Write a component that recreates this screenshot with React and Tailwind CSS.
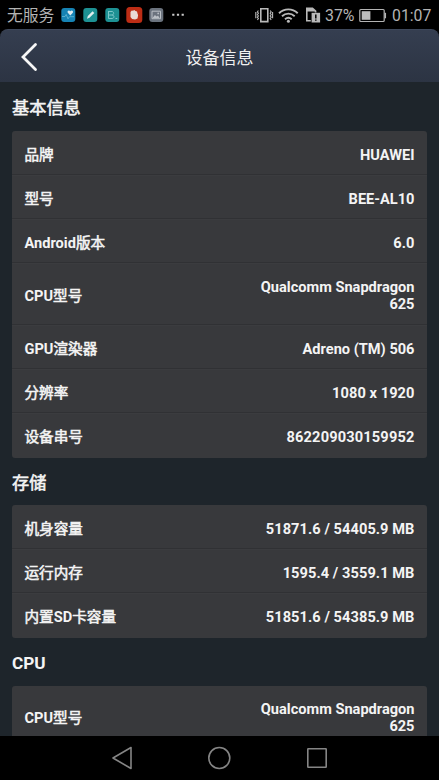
const basic = [
  ['品牌', 'HUAWEI', 'h-11'],
  ['型号', 'BEE-AL10', 'h-11'],
  ['Android版本', '6.0', 'h-11'],
  ['CPU型号', 'Qualcomm Snapdragon 625', 'h-[62px]'],
  ['GPU渲染器', 'Adreno (TM) 506', 'h-11'],
  ['分辨率', '1080 x 1920', 'h-11'],
  ['设备串号', '862209030159952', 'h-[45px]'],
];
const storage = [
  ['机身容量', '51871.6 / 54405.9 MB', 'h-11'],
  ['运行内存', '1595.4 / 3559.1 MB', 'h-11'],
  ['内置SD卡容量', '51851.6 / 54385.9 MB', 'h-[45px]'],
];
const cpu = [['CPU型号', 'Qualcomm Snapdragon 625', 'h-[60px]']];

// Latin runs use the bold face; Chinese runs use the regular face, thickened.
function Mixed({ text }) {
  return text.split(/([A-Za-z]+)/).filter(Boolean).map((part, i) =>
    /^[A-Za-z]/.test(part) ? (
      <span key={i}>{part}</span>
    ) : (
      <span key={i} className="font-normal [-webkit-text-stroke:0.55px_#f4f4f4]">{part}</span>
    ),
  );
}

function tracking(value) {
  if (/^\d{10,}$/.test(value)) return 'tracking-[0.16px]';
  return /^\d/.test(value) ? 'tracking-[0.07px]' : '';
}

function Card({ rows }) {
  return (
    <div className="mx-3 shrink-0 rounded-[3px] bg-[#38393c]">
      {rows.map(([label, value, height]) => (
        <div
          key={label}
          className={`${height} flex items-center justify-between border-b border-[#303134] pt-[5px] pr-[12.5px] pl-[12.5px] text-[14.6px] leading-[17px] font-bold text-[#f4f4f4] shadow-[0_1px_0_#3b3c3f] last:border-transparent last:shadow-none`}
        >
          <span className="whitespace-nowrap"><Mixed text={label} /></span>
          <span className={`max-w-[160px] text-right ${tracking(value)}`}>{value}</span>
        </div>
      ))}
    </div>
  );
}

function Heading({ children, className }) {
  return (
    <h2 className={`${className} flex shrink-0 items-center pl-3 text-[17.2px] leading-none font-bold text-[#f4f4f4]`}>
      <Mixed text={children} />
    </h2>
  );
}

function AppIcons() {
  return (
    <svg className="ml-[7px] shrink-0" width="125" height="30" viewBox="0 0 125 30" fill="none">
      <rect x="0.3" y="8" width="14" height="14" rx="3" fill="#1683b4" />
      <path d="M9.3 15.4 6.8 12.7c-1-1.6 1-3.2 2.5-1.5 1.5-1.7 3.5-.1 2.5 1.5Z" fill="#dceaf0" />
      <path d="M1 16.5h3l1.2-2 1.8 4.4 1.5-2.2H13" stroke="#67bad7" strokeWidth=".8" />
      <rect x="22.3" y="8" width="14" height="14" rx="3" fill="#1d9193" />
      <path d="m26 18.7.8-2.6 4.8-4.8 1.7 1.7-4.8 4.8Z" fill="#e0eeee" />
      <rect x="44.3" y="8" width="14" height="14" rx="3" fill="#1d9193" />
      <path d="M47.5 11.5h3.5c2.2 0 2.2 3.5 0 3.5h-3.5m3.5 0c2.6 0 2.6 3.5 0 3.5h-3.5v-7.5M54.5 18.5h1.8" stroke="#7cc8c9" strokeWidth="1" />
      <rect x="65.3" y="7" width="16" height="16" rx="3.5" fill="#bd2d15" />
      <path d="m69.5 12 1.3-1.6 1.2.4 1.3-.8 1.1 1.1 1.6.3.5 2 .6 1.8-.6 3.2-2.4 1-3-.5-1.6-2Z" fill="#e9d9d4" />
      <rect x="88.3" y="8" width="14" height="14" rx="3" fill="#6b737e" />
      <path d="M91 11.2h8.5v7.5H91Z" stroke="#bbc0c6" />
      <path d="m91.5 18 2.4-3 1.8 1.6 1.3-1.1 1.6 2.5Z" fill="#bbc0c6" />
      <circle cx="97.2" cy="13.4" r=".9" fill="#bbc0c6" />
      <path d="M111.2 14.8h2.2M115.9 14.8h2.2M120.6 14.8h2.2" stroke="#c9c9c9" strokeWidth="2" />
    </svg>
  );
}

function StatusBar() {
  return (
    <div className="flex h-[29px] shrink-0 items-center bg-black text-[#b4b4b4]">
      <span className="mt-[2px] ml-[7px] w-[47px] text-[15.8px] leading-none whitespace-nowrap">无服务</span>
      <AppIcons />
      <svg className="ml-auto shrink-0" width="67" height="30" viewBox="0 0 67 30" fill="none" stroke="#b9b9b9">
        <path d="M5.8 8.8h7v12.8h-7Z" strokeWidth="1.6" />
        <path d="M3.4 10.5l-1 1.4 1 1.3-1 1.4 1 1.3-1 1.4 1 1.3-1 1.4M.8 12v6.2M15.2 10.5l1 1.4-1 1.3 1 1.4-1 1.3 1 1.4-1 1.3 1 1.4M17.6 12v6.2" strokeWidth="1.1" />
        <path d="M24 13.3c5.3-5.2 13.4-5.2 18.7 0M27 16.3c3.7-3.5 9-3.5 12.7 0M30 19.2c2-1.8 4.7-1.8 6.7 0" strokeWidth="1.9" />
        <circle cx="33.4" cy="21.3" r="1.5" fill="#b9b9b9" stroke="none" />
        <path d="M60.6 12.5V11.2L57.5 8.2H51.8v12.6h4" strokeWidth="1.6" />
        <path d="M52 8.5h5.5l3 3H52Z" fill="#b9b9b9" stroke="none" />
        <rect x="56.6" y="12.8" width="8.5" height="9.7" fill="#b9b9b9" stroke="none" />
        <path d="M60.8 14.5v4M60.8 19.5v1.3" stroke="#000" strokeWidth="1.5" />
      </svg>
      <span className="mt-[3px] ml-[3px] w-[29px] text-[15.9px] leading-none">37%</span>
      <svg className="ml-[5px] shrink-0" width="29" height="30" viewBox="0 0 29 30" fill="none">
        <rect x=".8" y="9.5" width="24.4" height="12" rx="1" stroke="#b4b4b4" strokeWidth="1.2" />
        <rect x="2.7" y="11.2" width="8.7" height="8.6" fill="#bdbdbd" />
        <path d="M26.3 12.8v5.5" stroke="#b4b4b4" strokeWidth="1.5" />
      </svg>
      <span className="mt-[3px] mr-[7px] ml-[4px] w-[40px] text-[15.8px] leading-none">01:07</span>
    </div>
  );
}

export default function App() {
  return (
    <div className="flex h-[780px] w-[439px] flex-col overflow-hidden bg-[#1e252b] font-['Roboto','Noto_Sans_CJK_SC',sans-serif]">
      <StatusBar />
      <div className="shrink-0 bg-black">
        <header className="grid h-[53px] grid-cols-[56px_1fr_56px] items-center rounded-t-lg border-t border-[#3e485b] bg-linear-to-b from-[#353e50] to-[#2c3443]">
          <svg className="mt-[2px] ml-5" width="20" height="30" viewBox="0 0 20 30" fill="none">
            <path d="M15.5 2.6 3 15l12.5 12.4" stroke="#f7f7f7" strokeWidth="2.8" strokeLinecap="round" />
          </svg>
          <h1 className="mt-[4px] text-center text-[17px] leading-none text-[#f0f0f0]">设备信息</h1>
        </header>
      </div>
      <main className="flex min-h-0 flex-1 flex-col overflow-hidden">
        <Heading className="h-[49px] pt-[5px]">基本信息</Heading>
        <Card rows={basic} />
        <Heading className="h-[47px] pt-[5px]">存储</Heading>
        <Card rows={storage} />
        <Heading className="h-[48px] pt-[3px]">CPU</Heading>
        <Card rows={cpu} />
      </main>
      <nav className="flex h-11 shrink-0 bg-black">
        <svg width="439" height="44" viewBox="0 0 439 44" fill="none" stroke="#858585" strokeWidth="1.6" strokeLinejoin="round">
          <path d="M113 22 131 11.5v21Z" />
          <circle cx="219.3" cy="22" r="10.5" />
          <rect x="307.8" y="12.8" width="18.4" height="18.4" rx=".5" />
        </svg>
      </nav>
    </div>
  );
}
